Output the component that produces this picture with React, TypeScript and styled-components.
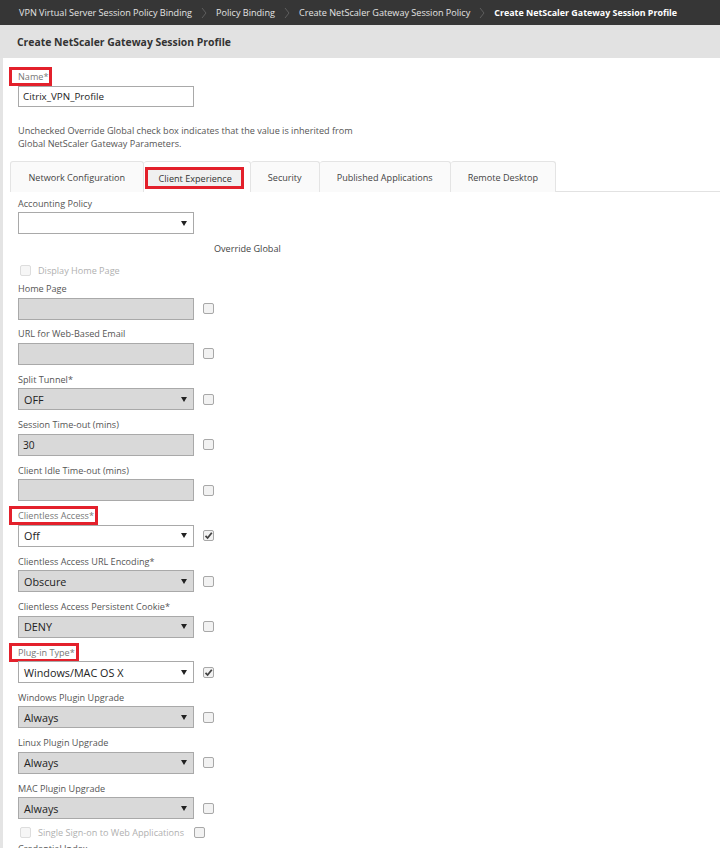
import React from "react";
import styled, { createGlobalStyle } from "styled-components";

const GlobalStyle = createGlobalStyle`
  body {
    margin: 0;
    background: #ffffff;
    font-family: "Open Sans", "Noto Sans", sans-serif;
    color: #444;
  }
`;

interface Field {
  label: string;
  kind: "input" | "select";
  value: string;
  enabled?: boolean;
  checked?: boolean;
  mark?: boolean;
}

const fields: Field[] = [
  { label: "Home Page", kind: "input", value: "" },
  { label: "URL for Web-Based Email", kind: "input", value: "" },
  { label: "Split Tunnel*", kind: "select", value: "OFF" },
  { label: "Session Time-out (mins)", kind: "input", value: "30" },
  { label: "Client Idle Time-out (mins)", kind: "input", value: "" },
  { label: "Clientless Access*", kind: "select", value: "Off", enabled: true, checked: true, mark: true },
  { label: "Clientless Access URL Encoding*", kind: "select", value: "Obscure" },
  { label: "Clientless Access Persistent Cookie*", kind: "select", value: "DENY" },
  { label: "Plug-in Type*", kind: "select", value: "Windows/MAC OS X", enabled: true, checked: true, mark: true },
  { label: "Windows Plugin Upgrade", kind: "select", value: "Always" },
  { label: "Linux Plugin Upgrade", kind: "select", value: "Always" },
  { label: "MAC Plugin Upgrade", kind: "select", value: "Always" },
];

const crumbs = [
  "VPN Virtual Server Session Policy Binding",
  "Policy Binding",
  "Create NetScaler Gateway Session Policy",
];

const tabs = ["Network Configuration", "Client Experience", "Security", "Published Applications", "Remote Desktop"];

function Chevron() {
  return (
    <svg width="6" height="12" viewBox="0 0 6 12">
      <path d="M1 1 L5 6 L1 11" fill="none" stroke="#5e5e5e" strokeWidth="1" />
    </svg>
  );
}

function Check({ checked, faint }: { checked?: boolean; faint?: boolean }) {
  return (
    <Box $faint={faint}>
      {checked && (
        <svg width="9" height="9" viewBox="0 0 9 9">
          <path d="M1.5 4.8 L3.6 7 L7.8 1.8" fill="none" stroke="#444" strokeWidth="1.8" />
        </svg>
      )}
    </Box>
  );
}

function Arrow() {
  return (
    <svg width="6" height="5" viewBox="0 0 6 5">
      <path d="M0 0 H6 L3 5 Z" fill="#222" />
    </svg>
  );
}

export default function App() {
  return (
    <>
      <GlobalStyle />
      <TopBar>
        {crumbs.map((c) => (
          <React.Fragment key={c}>
            <Crumb>{c}</Crumb>
            <Chevron />
          </React.Fragment>
        ))}
        <Crumb $current>Create NetScaler Gateway Session Profile</Crumb>
      </TopBar>
      <Header>Create NetScaler Gateway Session Profile</Header>
      <Panel>
        <Label>
          <Marked>Name*</Marked>
        </Label>
        <NameBox>Citrix_VPN_Profile</NameBox>
        <Note>
          Unchecked Override Global check box indicates that the value is inherited from
          <br />
          Global NetScaler Gateway Parameters.
        </Note>
        <TabBar>
          {tabs.map((t, i) =>
            i === 1 ? (
              <ActiveTab key={t}>
                <ActiveInner>{t}</ActiveInner>
              </ActiveTab>
            ) : (
              <Tab key={t}>{t}</Tab>
            )
          )}
        </TabBar>
        <TabBody>
          <Label>Accounting Policy</Label>
          <AccountingSelect $enabled>
            <span></span>
            <Arrow />
          </AccountingSelect>
          <OverrideHead>Override Global</OverrideHead>
          <CheckLine>
            <Check faint />
            <Faint>Display Home Page</Faint>
          </CheckLine>
          <Fields>
            {fields.map((f) => (
              <FieldRow key={f.label}>
                <Label>{f.mark ? <Marked>{f.label}</Marked> : f.label}</Label>
                <Control>
                  {f.kind === "input" ? (
                    <TextBox $enabled={f.enabled}>{f.value}</TextBox>
                  ) : (
                    <SelectBox $enabled={f.enabled}>
                      <span>{f.value}</span>
                      <Arrow />
                    </SelectBox>
                  )}
                  <Check checked={f.checked} />
                </Control>
              </FieldRow>
            ))}
          </Fields>
          <LastCheckLine>
            <Check faint />
            <Faint>Single Sign-on to Web Applications</Faint>
            <Check />
          </LastCheckLine>
          <Label>Credential Index</Label>
        </TabBody>
      </Panel>
    </>
  );
}

const TopBar = styled.div`
  height: 25px;
  background: #363636;
  display: flex;
  align-items: center;
  gap: 9px;
  padding-left: 19px;
  font-size: 9.1px;
  white-space: nowrap;
  overflow: hidden;
`;

const Crumb = styled.span<{ $current?: boolean }>`
  color: ${(p) => (p.$current ? "#ffffff" : "#e4e4e4")};
  font-weight: ${(p) => (p.$current ? 700 : 400)};
  font-size: ${(p) => (p.$current ? "8.9px" : "9.1px")};
`;

const Header = styled.div`
  height: 33px;
  background: #e2e2e2;
  display: flex;
  align-items: center;
  padding-left: 17px;
  font-size: 10.4px;
  font-weight: 700;
  color: #333;
`;

const Panel = styled.div`
  border-left: 3px solid #e4e4e4;
  padding: 12px 0 0 15px;
  min-height: 800px;
`;

const Label = styled.div`
  font-size: 9.1px;
  line-height: 13px;
  height: 13px;
  color: #555;
  white-space: nowrap;
`;

const Marked = styled.span`
  display: inline-block;
  color: #777;
  padding: 0 1px 0 6px;
  margin-left: -6px;
  line-height: 13px;
  outline: 3px solid #e3202b;
  outline-offset: 0.5px;
`;

const TextBox = styled.div<{ $enabled?: boolean }>`
  box-sizing: border-box;
  width: 176px;
  height: 22px;
  border: 1px solid #a9a9a9;
  background: ${(p) => (p.$enabled ? "#ffffff" : "#d9d9d9")};
  display: flex;
  align-items: center;
  padding-left: 4px;
  font-size: 10.2px;
  color: #222;
`;

const NameBox = styled(TextBox)`
  height: 21px;
  margin-top: 3px;
  background: #ffffff;
  font-size: 9.8px;
`;

const SelectBox = styled.div<{ $enabled?: boolean }>`
  box-sizing: border-box;
  width: 176px;
  height: 22px;
  border: 1px solid #a9a9a9;
  background: ${(p) => (p.$enabled ? "#ffffff" : "#d9d9d9")};
  display: flex;
  align-items: center;
  justify-content: space-between;
  padding: 0 6px 0 5px;
  font-size: 10.8px;
  color: #222;
`;

const AccountingSelect = styled(SelectBox)`
  margin-top: 2px;
`;

const Note = styled.div`
  margin-top: 17px;
  font-size: 9.1px;
  line-height: 13px;
  color: #555;
`;

const TabBar = styled.div`
  margin: 11px 0 0 -8px;
  height: 31px;
  box-sizing: border-box;
  border-bottom: 1px solid #e2e2e2;
  display: flex;
  align-items: stretch;
`;

const Tab = styled.div`
  box-sizing: border-box;
  height: 31px;
  padding: 0 17px;
  display: flex;
  align-items: center;
  background: #fafafa;
  border: 1px solid #e4e4e4;
  border-bottom: none;
  border-left: none;
  border-radius: 3px 3px 0 0;
  font-size: 9.1px;
  color: #444;
  white-space: nowrap;

  &:first-child {
    border-left: 1px solid #e4e4e4;
    padding: 0 17.5px;
  }
`;

const ActiveTab = styled(Tab)`
  padding: 5px 6px 3px 1px;
  background: #ffffff;
`;

const ActiveInner = styled.span`
  display: flex;
  align-items: center;
  height: 100%;
  box-sizing: border-box;
  border: 3px solid #e3202b;
  background: #f0f0f0;
  padding: 0 9px 0 11px;
  color: #333;
`;

const TabBody = styled.div`
  padding-top: 5px;
`;

const OverrideHead = styled.div`
  margin: 8px 0 0 196px;
  font-size: 9.1px;
  line-height: 13px;
  color: #444;
`;

const CheckLine = styled.div`
  display: flex;
  align-items: center;
  gap: 7px;
  height: 13px;
  margin: 9px 0 5px 2px;
`;

const LastCheckLine = styled(CheckLine)`
  margin: -1px 0 3px 2px;
`;

const Faint = styled.span`
  font-size: 9.1px;
  color: #b0b0b0;
  margin-right: 3px;
`;

const Box = styled.span<{ $faint?: boolean }>`
  box-sizing: border-box;
  width: 11px;
  height: 11px;
  border: 1px solid ${(p) => (p.$faint ? "#dddddd" : "#a8a8a8")};
  border-radius: 2px;
  background: ${(p) => (p.$faint ? "#f6f6f6" : "#f2f2f2")};
  display: inline-flex;
  align-items: center;
  justify-content: center;
  flex-shrink: 0;
`;

const Fields = styled.div`
  display: flex;
  flex-direction: column;
`;

const FieldRow = styled.div`
  height: 45.45px;
  display: flex;
  flex-direction: column;
  gap: 2.5px;
`;

const Control = styled.div`
  display: flex;
  align-items: center;
  gap: 9px;
`;
